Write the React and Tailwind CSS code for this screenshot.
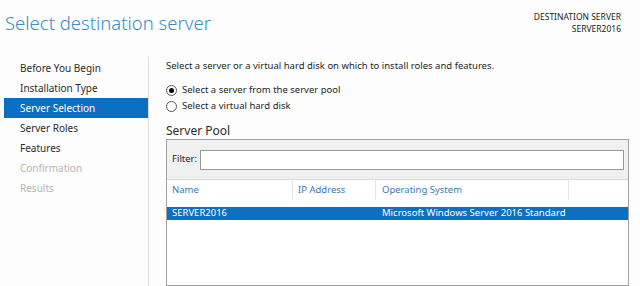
import React from "react";

const steps = [
  { label: "Before You Begin", state: "done" },
  { label: "Installation Type", state: "done" },
  { label: "Server Selection", state: "active" },
  { label: "Server Roles", state: "done" },
  { label: "Features", state: "done" },
  { label: "Confirmation", state: "disabled" },
  { label: "Results", state: "disabled" },
];

const Radio = ({ checked, label }) => (
  <div className="flex items-center h-4">
    <span className="w-[11px] h-[11px] rounded-full border border-[#555] bg-white flex items-center justify-center">
      {checked && <span className="w-[5px] h-[5px] rounded-full bg-black" />}
    </span>
    <span className="ml-[5px]">{label}</span>
  </div>
);

const App = () => {
  return (
    <div
      className="w-[640px] h-[286px] overflow-hidden bg-[#fdfdfd] text-[#1e1e1e] flex flex-col"
      style={{ fontFamily: '"Noto Sans", "Open Sans", sans-serif' }}
    >
      {/* Header */}
      <div className="h-[57px] flex justify-between">
        <div className="pl-[5px] pt-[9px] text-[18.5px] font-light text-[#3a8cc4] leading-[28px]">
          Select destination server
        </div>
        <div className="pr-[19px] pt-[11px] text-right text-[8.5px] leading-[12px] text-[#222]">
          <div>DESTINATION SERVER</div>
          <div>SERVER2016</div>
        </div>
      </div>

      {/* Body */}
      <div className="flex flex-1 min-h-0">
        {/* Sidebar */}
        <div className="w-[149px] border-r border-[#dcdcdc] pt-[1px] text-[10px]">
          {steps.map((s) => (
            <div
              key={s.label}
              className={`ml-[4px] h-[20px] flex items-center pl-[16px] ${
                s.state === "active"
                  ? "bg-[#0b6fc2] text-white"
                  : s.state === "disabled"
                  ? "text-[#b4b4b4]"
                  : "text-[#2b2b2b]"
              }`}
            >
              {s.label}
            </div>
          ))}
        </div>

        {/* Main */}
        <div className="flex-1 pl-[17px] pr-[11px] pt-[1px] flex flex-col text-[9.5px]">
          <div className="h-4 flex items-center">
            Select a server or a virtual hard disk on which to install roles and features.
          </div>
          <div className="mt-[8px] flex flex-col">
            <Radio checked label="Select a server from the server pool" />
            <Radio label="Select a virtual hard disk" />
          </div>
          <div className="mt-[9px] h-4 flex items-center text-[12px] text-[#2b2b2b]">Server Pool</div>

          {/* Pool box */}
          <div className="flex-1 border border-[#a0a0a0] flex flex-col bg-white">
            <div className="h-[40px] bg-[#f0f0f0] border-b border-[#d8d8d8] flex items-center pl-[5px] pr-[4px]">
              <span className="w-[28px]">Filter:</span>
              <div className="flex-1 h-[20px] border border-[#9a9a9a] bg-white" />
            </div>
            <div className="h-[20px] flex text-[#3a78ad]">
              <div className="w-[126px] pl-[5px] flex items-center border-r border-[#e4e4e4]">Name</div>
              <div className="w-[83px] pl-[5px] flex items-center border-r border-[#e4e4e4]">IP Address</div>
              <div className="w-[193px] pl-[6px] flex items-center border-r border-[#e4e4e4]">Operating System</div>
              <div className="flex-1" />
            </div>
            <div className="mt-[7px] h-[13px] bg-[#0b6fc2] text-white flex items-center">
              <div className="w-[126px] pl-[5px]">SERVER2016</div>
              <div className="w-[83px]" />
              <div className="pl-[6px]">Microsoft Windows Server 2016 Standard</div>
            </div>
          </div>
        </div>
      </div>
    </div>
  );
};

export default App;
